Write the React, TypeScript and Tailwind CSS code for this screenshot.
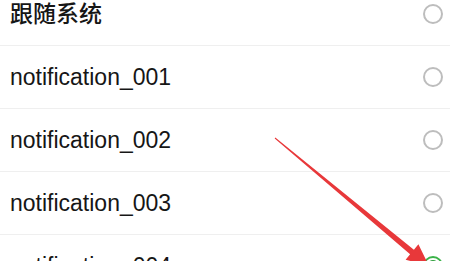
const options = [
  { label: '跟随系统', checked: false, cjk: true },
  { label: 'notification_001', checked: false, cjk: false },
  { label: 'notification_002', checked: false, cjk: false },
  { label: 'notification_003', checked: false, cjk: false },
  { label: 'notification_004', checked: true, cjk: false },
];

function Radio({ checked }: { checked: boolean }) {
  if (checked) {
    return (
      <span className="flex h-[20px] w-[20px] items-center justify-center rounded-full border-2 border-[#3cb34a]">
        <span className="h-[12px] w-[12px] rounded-full bg-[#2e9e3c]" />
      </span>
    );
  }
  return <span className="h-[20px] w-[20px] rounded-full border-2 border-[#bdbdbd]" />;
}

export default function App() {
  return (
    <div
      className="relative h-[261px] w-[450px] overflow-hidden bg-white"
      style={{ fontFamily: '"Liberation Sans", "Noto Sans CJK SC", sans-serif' }}
    >
      <div className="mt-[-17px] flex flex-col">
        {options.map((o) => (
          <div
            key={o.label}
            className="flex h-[63px] items-center justify-between border-b border-[#efefef] pl-[10px] pr-[7px]"
          >
            <span className={`text-[23px] leading-none text-[#161616] ${o.cjk ? 'font-medium' : 'font-normal'}`}>
              {o.label}
            </span>
            <Radio checked={o.checked} />
          </div>
        ))}
      </div>

      {/* red pointer arrow */}
      <svg className="pointer-events-none absolute left-0 top-0" width="450" height="261" viewBox="0 0 450 261">
        <polygon
          points="275.3,137.6 413.9,249.7 418.4,244.3 429,266 405.6,259.7 410.1,254.3 274.7,138.4"
          fill="#e8383a"
        />
      </svg>
    </div>
  );
}
